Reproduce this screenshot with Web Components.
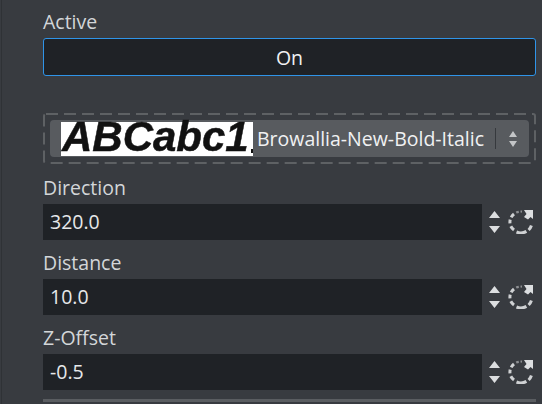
<!DOCTYPE html>
<html><head><meta charset="utf-8"><style>
html,body{margin:0;height:100%;background:#383b40;overflow:hidden}
body{width:542px;height:404px;font-family:"Open Sans","Noto Sans",sans-serif;color:#e6e8ea}
</style></head><body>
<template id="t-panel"><style>
:host{display:flex;flex-direction:column;box-sizing:border-box;width:541px;height:404px;margin-left:1px;padding:0 6px 0 41px;border-left:1px solid #2f3236;background:#383b40;overflow:hidden}
</style><slot></slot></template>
<template id="t-label"><style>
:host{display:block;font-size:19.5px;line-height:24px;color:#d3d6d9}
</style><slot></slot></template>
<template id="t-toggle"><style>
:host{display:flex;align-items:center;justify-content:center;box-sizing:border-box;height:38px;background:#1f2226;border:1px solid #2f94e8;border-radius:3px;font-size:19.5px;color:#f0f1f2;margin-top:4px}
</style><slot></slot></template>
<template id="t-font"><style>
:host{display:block;box-sizing:border-box;height:51px;margin-top:37px;padding:7px;position:relative}
svg.d{position:absolute;left:0;top:0}
.s{display:flex;align-items:center;box-sizing:border-box;height:37px;width:479px;background:#585b5f;border-radius:4px;padding-left:11px}
.p{position:relative;width:192px;height:34px;background:#fff;flex:none;box-sizing:border-box;padding-left:1px}
.p span{display:block;font:italic 700 42px/30px "Liberation Sans",Arial,sans-serif;color:#111;white-space:nowrap;-webkit-text-stroke:.5px #111;filter:blur(.5px)}
.p::after{content:"";position:absolute;right:0;bottom:3px;width:2px;height:4px;background:#111}
.n{margin-left:4px;font-size:19.5px;color:#f0f1f2;white-space:nowrap;width:227px;flex:none}
.b{width:1px;height:21px;background:#36393d;margin-left:11px;flex:none}
.a{margin-left:13px;flex:none;display:block}
</style>
<svg class="d" width="493" height="51"><rect x="1" y="1" width="491" height="49" rx="2" fill="none" stroke="#5e6164" stroke-width="2" stroke-dasharray="12 6"/></svg>
<div class="s"><div class="p"><span>ABCabc1</span></div><div class="n"><slot></slot></div><div class="b"></div>
<svg class="a" width="8" height="16" viewBox="0 0 8 16"><path d="M4 0 8 6H0zM0 10H8L4 16z" fill="#c3c5c7"/></svg></div></template>
<template id="t-num"><style>
:host{display:block}
.l{font-size:19.5px;line-height:24px;color:#d3d6d9;height:28px}
.r{display:flex;align-items:center;height:36px}
.i{width:439px;height:36px;box-sizing:border-box;background:#1f2226;padding-left:7px;font-size:19.5px;line-height:36px;color:#e6e8ea;flex:none}
svg{display:block;flex:none}
.ar{margin-left:7px}.rs{margin-left:8px}
</style><div class="l"><slot name="label"></slot></div><div class="r"><div class="i"><slot></slot></div>
<svg class="ar" width="11" height="24" viewBox="0 0 11 24"><path d="M5.5 1 11 8H0zM0 16H11L5.5 23z" fill="#dcdee0"/></svg>
<svg class="rs" width="26" height="24" viewBox="0 0 26 24"><path d="M16 0H25V9L22.5 7 20 9.5 16 7 18.5 4z" fill="#dcdee0"/><path d="M23.4 15.5A11 11 0 0 1 20.6 20M18.4 21.4A11 11 0 0 1 8.5 22M6 20A11 11 0 0 1 2.8 16.2M2 13.4A11 11 0 0 1 2.2 9.6M3.2 7.4A11 11 0 0 1 6 4" fill="none" stroke="#cfd1d3" stroke-width="3"/><path d="M8.2 2.6A11 11 0 0 1 10.8 1.8M12.5 1.5A11 11 0 0 1 14 1.6" fill="none" stroke="#8d8f92" stroke-width="2.2"/></svg>
</div></template>
<template id="t-bar"><style>:host{display:block;height:3px;background:#5a5d61;margin-top:9px}</style></template>
<script>
for(const n of ['panel','label','toggle','font','num','bar']){
 customElements.define('x-'+n,class extends HTMLElement{constructor(){super();this.attachShadow({mode:'open'}).appendChild(document.getElementById('t-'+n).content.cloneNode(true))}});
}
</script>
<x-panel>
<x-label style="margin-top:10px">Active</x-label>
<x-toggle>On</x-toggle>
<x-font>Browallia-New-Bold-Italic</x-font>
<x-num style="margin-top:12px"><span slot="label">Direction</span>320.0</x-num>
<x-num style="margin-top:11px"><span slot="label">Distance</span>10.0</x-num>
<x-num style="margin-top:11px"><span slot="label">Z-Offset</span>-0.5</x-num>
<x-bar></x-bar>
</x-panel>
</body></html>
